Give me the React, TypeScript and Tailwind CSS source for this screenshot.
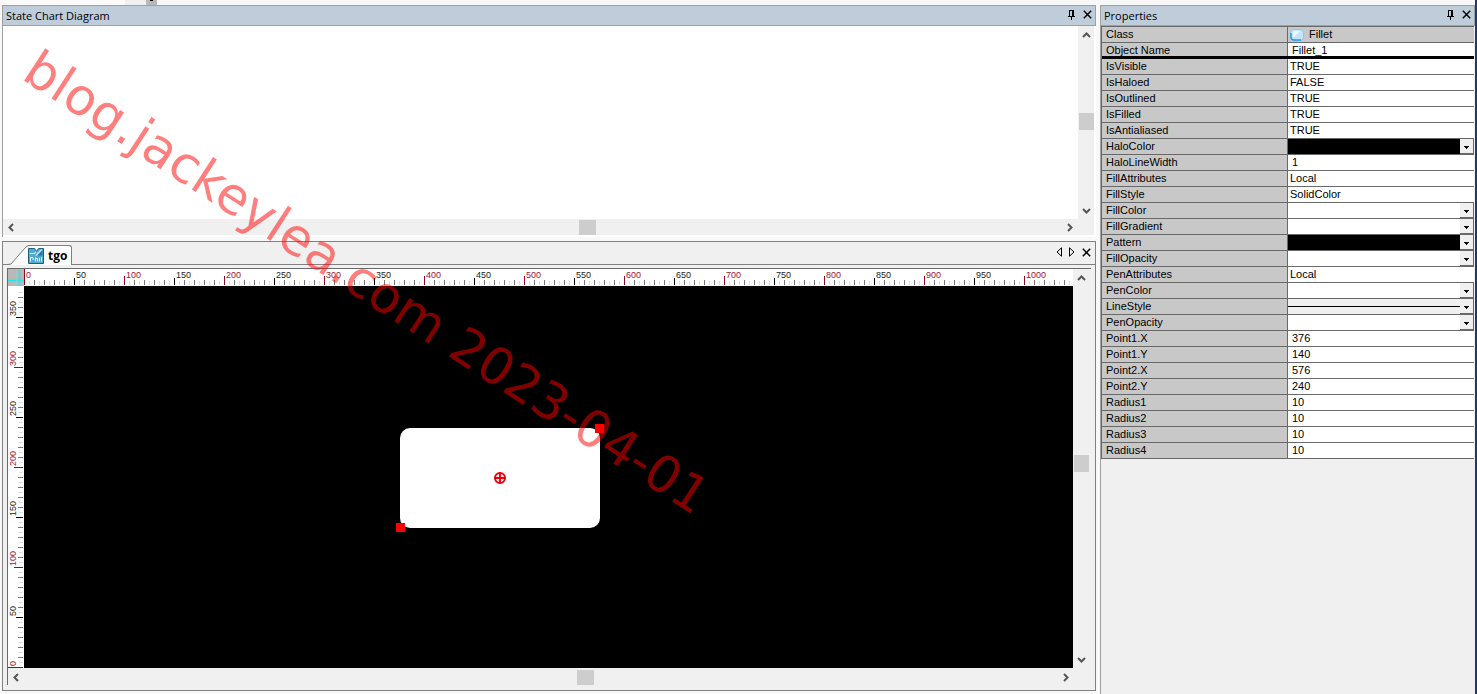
import { useState } from 'react';
import clsx from 'clsx';

type Kind = 'class' | 'text' | 'choice' | 'picker';

interface Property {
  name: string;
  kind: Kind;
  value?: string;
  swatch?: string;
}

const PROPERTIES: Property[] = [
  { name: 'Class', kind: 'class', value: 'Fillet' },
  { name: 'Object Name', kind: 'text', value: 'Fillet_1' },
  { name: 'IsVisible', kind: 'choice', value: 'TRUE' },
  { name: 'IsHaloed', kind: 'choice', value: 'FALSE' },
  { name: 'IsOutlined', kind: 'choice', value: 'TRUE' },
  { name: 'IsFilled', kind: 'choice', value: 'TRUE' },
  { name: 'IsAntialiased', kind: 'choice', value: 'TRUE' },
  { name: 'HaloColor', kind: 'picker', swatch: 'bg-black' },
  { name: 'HaloLineWidth', kind: 'text', value: '1' },
  { name: 'FillAttributes', kind: 'choice', value: 'Local' },
  { name: 'FillStyle', kind: 'choice', value: 'SolidColor' },
  { name: 'FillColor', kind: 'picker', swatch: 'bg-white' },
  { name: 'FillGradient', kind: 'picker', swatch: 'bg-white' },
  { name: 'Pattern', kind: 'picker', swatch: 'bg-black' },
  { name: 'FillOpacity', kind: 'picker', swatch: 'bg-white' },
  { name: 'PenAttributes', kind: 'choice', value: 'Local' },
  { name: 'PenColor', kind: 'picker', swatch: 'bg-white' },
  { name: 'LineStyle', kind: 'picker', swatch: 'line' },
  { name: 'PenOpacity', kind: 'picker', swatch: 'bg-white' },
  { name: 'Point1.X', kind: 'text', value: '376' },
  { name: 'Point1.Y', kind: 'text', value: '140' },
  { name: 'Point2.X', kind: 'text', value: '576' },
  { name: 'Point2.Y', kind: 'text', value: '240' },
  { name: 'Radius1', kind: 'text', value: '10' },
  { name: 'Radius2', kind: 'text', value: '10' },
  { name: 'Radius3', kind: 'text', value: '10' },
  { name: 'Radius4', kind: 'text', value: '10' },
];

const CHOICES: Record<string, string[]> = {
  TRUE: ['TRUE', 'FALSE'],
  FALSE: ['TRUE', 'FALSE'],
  Local: ['Local', 'Inherited'],
  SolidColor: ['SolidColor', 'Gradient', 'Pattern'],
};

const PinIcon = () => (
  <svg width="9" height="10" viewBox="0 0 9 10" fill="none" stroke="black" shapeRendering="crispEdges">
    <path d="M2.5 0v6M2 0.5h4M5.5 0v6M6.5 0v6M1 6.5h7M4.5 7v3" />
  </svg>
);

const CloseIcon = () => (
  <svg width="9" height="9" viewBox="0 0 9 9" stroke="black" strokeWidth="1.5">
    <path d="M0.8 0.8l7.4 7.4M8.2 0.8l-7.4 7.4" />
  </svg>
);

const PanelHeader = ({ title }: { title: string }) => (
  <header className="flex h-[21px] shrink-0 items-center border border-[#a0a0a0] bg-[#bfcddb] px-[3px]">
    <h2 className="flex-1 font-[Open_Sans,sans-serif] text-[11px] leading-4">{title}</h2>
    <div className="flex items-center gap-[7px] pb-0.5">
      <button type="button" aria-label="Auto hide">
        <PinIcon />
      </button>
      <button type="button" aria-label="Close">
        <CloseIcon />
      </button>
    </div>
  </header>
);

const ARROWS = {
  up: 'M1 6l3.5-3.5L8 6',
  down: 'M1 3l3.5 3.5L8 3',
  left: 'M6 1L2.5 4.5L6 8',
  right: 'M3 1l3.5 3.5L3 8',
};

const ScrollArrow = ({ direction }: { direction: keyof typeof ARROWS }) => (
  <button
    type="button"
    aria-label={`Scroll ${direction}`}
    className="flex size-4 shrink-0 items-center justify-center"
  >
    <svg width="9" height="9" viewBox="0 0 9 9" fill="none" stroke="#555" strokeWidth="2">
      <path d={ARROWS[direction]} />
    </svg>
  </button>
);

interface ScrollBarProps {
  vertical?: boolean;
  before: number;
  after: number;
}

const ScrollBar = ({ vertical = false, before, after }: ScrollBarProps) => (
  <div
    className={clsx(
      'flex shrink-0 items-center bg-[#f0f0f0]',
      vertical ? 'w-4 flex-col py-px' : 'h-4',
    )}
  >
    <ScrollArrow direction={vertical ? 'up' : 'left'} />
    <div style={{ flexGrow: before }} />
    <div className={clsx('shrink-0 bg-[#cdcdcd]', vertical ? 'h-[17px] w-[15px]' : 'h-[15px] w-[17px]')} />
    <div style={{ flexGrow: after }} />
    <ScrollArrow direction={vertical ? 'down' : 'right'} />
  </div>
);

const WIDTH_UNITS = 1050;
const HEIGHT_UNITS = 380;

const range = (length: number, step: number) => Array.from({ length: Math.ceil(length / step) }, (_, i) => i * step);

const tickStyle = (n: number) => {
  if (n % 100 === 0) return { color: '#8f0a22', size: n === 0 ? 16 : 9 };
  if (n % 50 === 0) return { color: '#000000', size: 7 };
  if (n % 10 === 0) return { color: '#777777', size: 5 };
  return { color: '#dddddd', size: 4 };
};

const labelColor = (n: number) => (n % 100 === 0 ? '#a01535' : '#222222');

const HorizontalRuler = () => (
  <div className="h-[17px] min-w-0 flex-1 overflow-hidden bg-white">
    <svg width={WIDTH_UNITS} height="17" className="max-w-none font-[Liberation_Sans,sans-serif] text-[9px]">
      {range(WIDTH_UNITS, 5).map((n) => {
        const { color, size } = tickStyle(n);
        return <rect key={n} x={n} y={16 - size} width="1" height={size} fill={color} shapeRendering="crispEdges" />;
      })}
      {range(WIDTH_UNITS, 50).map((n) => (
        <text key={n} x={n + 2} y="9" fill={labelColor(n)}>
          {n}
        </text>
      ))}
    </svg>
  </div>
);

// The vertical scale grows upwards from the bottom edge
const VerticalRuler = () => (
  <div className="flex min-h-0 w-4 shrink-0 flex-col justify-end overflow-hidden bg-white">
    <svg width="16" height={HEIGHT_UNITS} className="shrink-0 font-[Liberation_Sans,sans-serif] text-[9px]">
      {range(HEIGHT_UNITS, 5).map((n) => {
        const { color, size } = tickStyle(n);
        return (
          <rect
            key={n}
            x={15 - size}
            y={HEIGHT_UNITS - 1 - n}
            width={size}
            height="1"
            fill={color}
            shapeRendering="crispEdges"
          />
        );
      })}
      {range(HEIGHT_UNITS, 50).map((n) => (
        <text key={n} transform={`translate(8 ${HEIGHT_UNITS - 2 - n}) rotate(-90)`} fill={labelColor(n)}>
          {n}
        </text>
      ))}
    </svg>
  </div>
);

const RulerCorner = () => (
  <div className="h-[17px] w-4 shrink-0 bg-[#b8b8b8]">
    <svg width="16" height="17" viewBox="0 0 16 17">
      <path d="M11.500 1V17M0 11.500H16" fill="none" stroke="#28e6e6" strokeWidth="1.600" />
      <path d="M8.500 3V17M3 14.500H16" fill="none" stroke="#8ed6d6" strokeWidth="0.600" />
    </svg>
  </div>
);

const Canvas = () => (
  <div className="relative min-w-0 flex-1 overflow-hidden bg-black">
    <div className="absolute bottom-[140px] left-[376px] h-[100px] w-[200px] rounded-[10px] bg-white">
      <span className="absolute -top-1 -right-1 size-[9px] bg-[#ff0000]" />
      <span className="absolute -bottom-1 -left-1 size-[9px] bg-[#ff0000]" />
      <svg width="12" height="12" viewBox="0 0 12 12" className="absolute top-[44px] left-[94px]">
        <circle cx="6" cy="6" r="5" fill="white" stroke="#e8000b" strokeWidth="2" />
        <path d="M6 0v12M0 6h12" stroke="#e8000b" strokeWidth="1.8" />
        <path d="M4.500 3.500h3L6 5zM4.500 8.500h3L6 7zM3.500 4.500v3L5 6zM8.500 4.500v3L7 6z" fill="#e8000b" />
      </svg>
    </div>
  </div>
);

const DocumentIcon = () => (
  <svg width="16" height="16" viewBox="0 0 16 16">
    <path d="M0.5 0.5h6l2 3 2-3h5v15h-15z" fill="#52a9d2" stroke="#1d5f85" />
    <path d="M1.500 5.500h5l1.500-2M8 7.500l5.500-6" fill="none" stroke="#c8ebf8" strokeWidth="1.2" />
    <path d="M9.500 7.500l5-5v5z" fill="#2478a6" />
    <path
      d="M2.500 13.500v-4h2.500v2.500M7.500 13.500v-4M7.500 10.500h2v3M11.500 13.500v-3.500M13.500 13.500v-4"
      fill="none"
      stroke="#e4f6fd"
    />
  </svg>
);

const TabBar = () => (
  <div className="flex h-[23px] shrink-0 items-end border-b border-[#808080]">
    <div className="-mb-px flex h-[20px] pl-[5px]">
      <svg width="20" height="20" viewBox="0 0 20 20">
        <path d="M0 20L3 19 17 3 20 0.5V20z" fill="white" />
        <path d="M0 19.500L3 19 17 3 20 0.500" fill="none" stroke="#808080" />
      </svg>
      <button
        type="button"
        className="flex items-center gap-1 rounded-tr-[3px] border-t border-r border-[#808080] bg-white pr-1 font-[Open_Sans,sans-serif] text-xs leading-4 font-bold"
      >
        <DocumentIcon />
        tgo
      </button>
    </div>
    <div className="flex flex-1 items-center justify-end gap-[7px] pr-1 pb-[7px]">
      <button type="button" aria-label="Previous tab">
        <svg width="6" height="10" viewBox="0 0 6 10" fill="none" stroke="black">
          <path d="M5.500 0.800v8.400L1 5z" />
        </svg>
      </button>
      <button type="button" aria-label="Next tab">
        <svg width="6" height="10" viewBox="0 0 6 10" fill="none" stroke="black">
          <path d="M0.500 0.800v8.400L5 5z" />
        </svg>
      </button>
      <button type="button" aria-label="Close tab">
        <CloseIcon />
      </button>
    </div>
  </div>
);

const StateChartPanel = () => (
  <section className="flex h-[232px] shrink-0 flex-col">
    <PanelHeader title="State Chart Diagram" />
    <div className="flex min-h-0 flex-1 flex-col border-l border-[#a0a0a0] bg-white pr-0.5 pb-0.5">
      <div className="flex min-h-0 flex-1">
        <div className="flex-1" />
        <ScrollBar vertical before={70} after={72} />
      </div>
      <div className="flex">
        <div className="flex-1 bg-[#f0f0f0]">
          <ScrollBar before={561} after={465} />
        </div>
        <div className="w-[17px] bg-[#f0f0f0]" />
      </div>
    </div>
  </section>
);

const EditorPanel = () => (
  <section className="flex min-h-0 flex-1 flex-col border border-[#808080] bg-[#f0f0f0]">
    <TabBar />
    <div className="mx-1 mt-[3px] mb-[5px] flex min-h-0 flex-1 flex-col border-t border-l border-[#696969] pr-0.5">
      <div className="flex min-h-0 flex-1">
        <div className="flex min-w-0 flex-1 flex-col">
          <div className="flex">
            <RulerCorner />
            <HorizontalRuler />
          </div>
          <div className="flex min-h-0 flex-1">
            <VerticalRuler />
            <Canvas />
          </div>
        </div>
        <ScrollBar vertical before={169} after={180} />
      </div>
      <div className="flex pt-px pr-4">
        <div className="flex-1">
          <ScrollBar before={552} after={462} />
        </div>
      </div>
    </div>
  </section>
);

const PropertyValue = ({ property }: { property: Property }) => {
  const [value, setValue] = useState(property.value ?? '');
  const { name, kind, swatch } = property;

  if (kind === 'class') {
    return (
      <div className="flex items-center gap-[5px] pl-0.5">
        <svg width="14" height="12" viewBox="0 0 14 12">
          <rect x="0.500" y="0.500" width="13" height="11" rx="3.500" fill="#c4e4fa" stroke="#8cc6ea" />
          <path d="M1 4v4q0 3 3 3h7" fill="none" stroke="#249be0" strokeWidth="1.400" />
          <path d="M3 3.500q0-1.500 2-1.500h5L4 8H3z" fill="#eef8ff" />
        </svg>
        {value}
      </div>
    );
  }

  if (kind === 'text') {
    return (
      <input
        id={name}
        value={value}
        onChange={(e) => setValue(e.target.value)}
        className="block h-[15px] w-full pl-1 outline-none"
      />
    );
  }

  if (kind === 'choice') {
    return (
      <select
        id={name}
        value={value}
        onChange={(e) => setValue(e.target.value)}
        className="block h-[15px] w-full appearance-none pl-0.5 outline-none"
      >
        {CHOICES[property.value ?? ''].map((option) => (
          <option key={option}>{option}</option>
        ))}
      </select>
    );
  }

  return (
    <div className="flex h-[15px]">
      {swatch === 'line' ? (
        <div className="flex flex-1 items-center bg-[#f0f0f0]">
          <div className="h-px w-full bg-black" />
        </div>
      ) : (
        <div className={clsx('flex-1', swatch)} />
      )}
      <button
        id={name}
        type="button"
        className="flex w-[14px] items-center justify-center border-r border-b border-[#696969] bg-[#f0f0f0] pt-0.5"
      >
        <svg width="5" height="3" viewBox="0 0 5 3" shapeRendering="crispEdges">
          <path d="M0 0h5v1H4v1H3v1H2V2H1V1H0z" />
        </svg>
      </button>
    </div>
  );
};

const PropertyRow = ({ property }: { property: Property }) => {
  const { name, kind } = property;
  // a heavy rule closes the identity rows
  const heavy = name === 'Object Name';
  const line = heavy ? 'border-b-3 border-black' : 'border-b border-[#696969]';
  const height = heavy ? 'h-[13px]' : 'h-[15px]';

  return (
    <tr>
      <th scope="row" className={clsx('w-[185px] bg-[#c8c8c8] p-0 pl-1 text-left font-normal', line)}>
        <label htmlFor={kind === 'class' ? undefined : name} className={clsx('block', height)}>
          {name}
        </label>
      </th>
      <td className={clsx('p-0', kind === 'class' ? 'bg-[#c8c8c8]' : 'bg-white', line)}>
        <div className={clsx('overflow-hidden border-l border-[#696969]', height)}>
          <PropertyValue property={property} />
        </div>
      </td>
    </tr>
  );
};

const PropertiesPanel = () => (
  <aside className="flex w-[375px] shrink-0 flex-col pt-[5px]">
    <PanelHeader title="Properties" />
    <div className="flex-1 border-l border-[#a0a0a0] bg-[#f0f0f0] pr-px">
      <table className="w-full table-fixed border-separate border-spacing-0 border-t border-l border-[#696969] text-[11px] leading-[15px]">
        <tbody>
          {PROPERTIES.map((property) => (
            <PropertyRow key={property.name} property={property} />
          ))}
        </tbody>
      </table>
    </div>
  </aside>
);

const App = () => (
  <div className="relative flex h-screen overflow-hidden bg-[#f8f8f8] font-[Liberation_Sans,sans-serif] text-black">
    <main className="flex min-w-0 flex-1 flex-col gap-1 pr-1 pb-[3px] pl-0.5">
      <div className="-mb-1 flex h-[5px] shrink-0">
        <div className="w-[123px] bg-[#fcfafa]" />
        <div className="w-[21px] bg-[#f0f0f0]" />
        <div className="flex w-[11px] justify-center bg-[#b8b8b8]">
          <div className="h-px w-[3px] bg-black" />
        </div>
      </div>
      <StateChartPanel />
      <EditorPanel />
    </main>
    <PropertiesPanel />
    <div className="w-0.5 shrink-0 bg-[#1c3a70]" />
    <p className="pointer-events-none absolute top-[35px] left-4 origin-bottom-left rotate-33 font-[DejaVu_Sans,sans-serif] text-[51px] leading-[50px] whitespace-nowrap text-[#ff0000]/50">
      blog.jackeylea.com 2023-04-01
    </p>
  </div>
);

export default App;
